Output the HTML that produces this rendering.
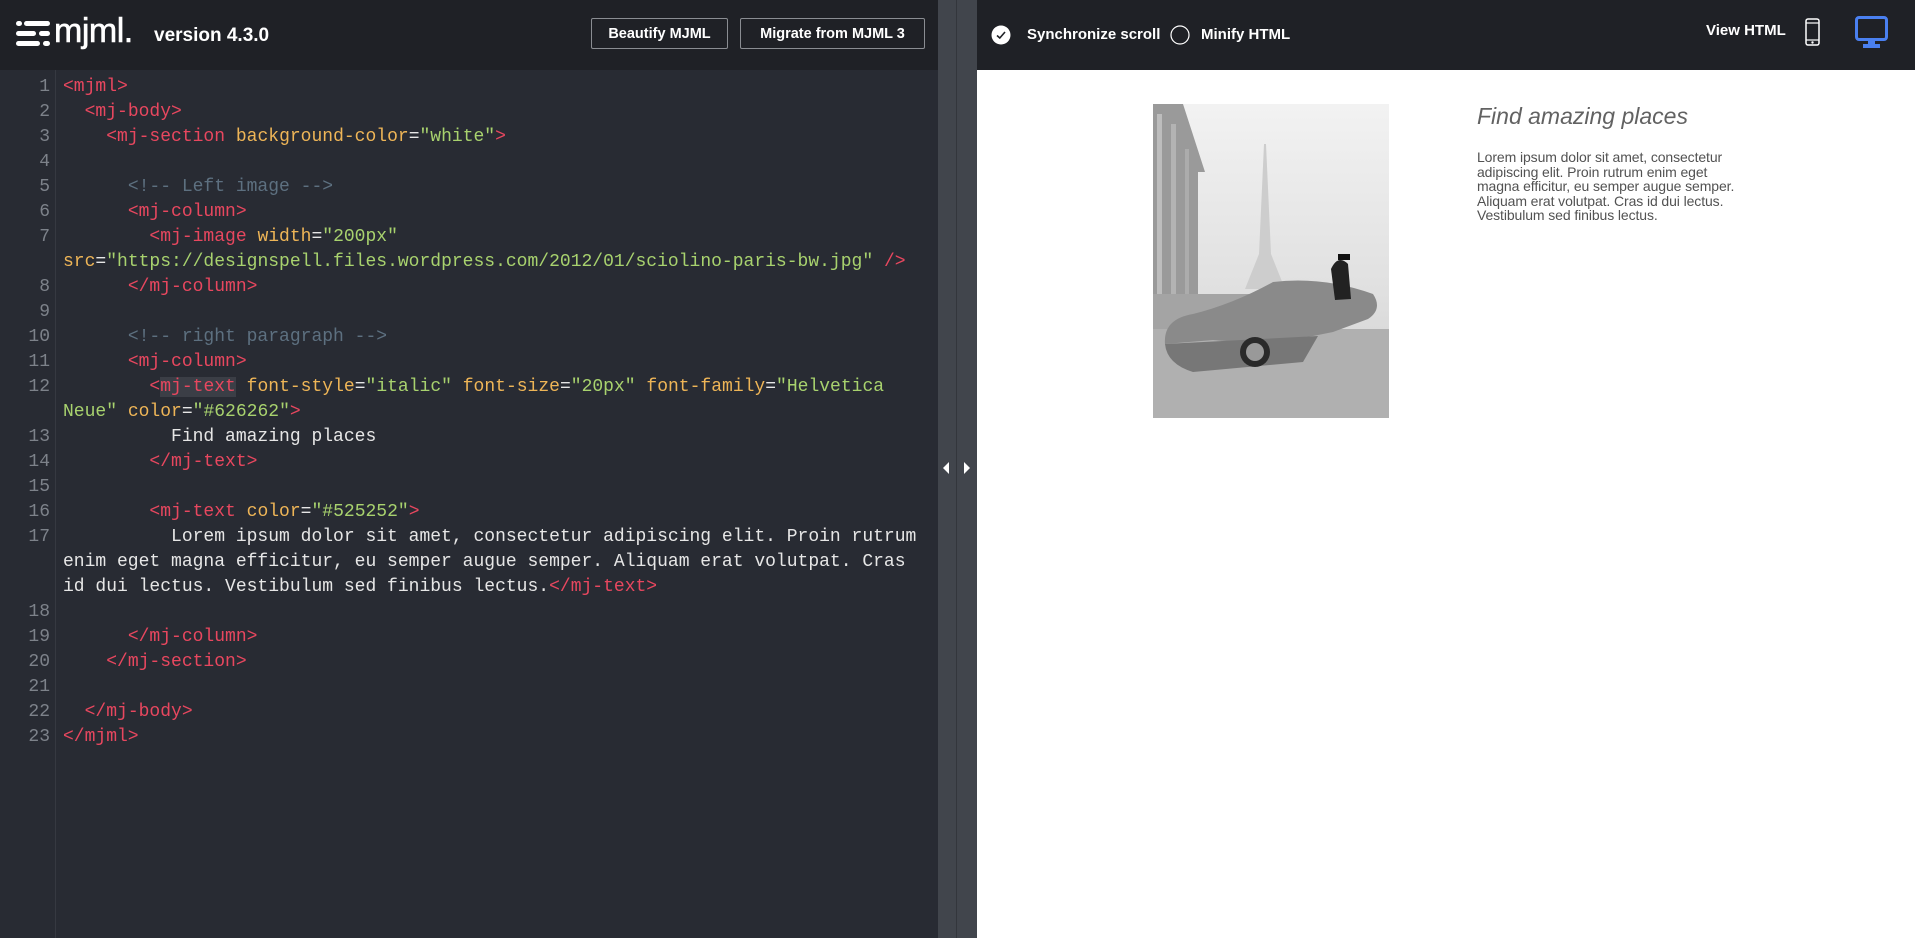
<!DOCTYPE html>
<html><head><meta charset="utf-8"><style>
*{margin:0;padding:0;box-sizing:border-box}
body{width:1915px;height:938px;overflow:hidden;background:#fff;font-family:"Liberation Sans",sans-serif;position:relative}
.hdr{position:absolute;top:0;height:70px;background:#1f2126}
.btn{position:absolute;top:18px;height:31px;border:1px solid #8a8d92;border-radius:2px;color:#fff;font-weight:bold;font-size:14.5px;line-height:31px;text-align:center}
.ed{position:absolute;left:0;top:70px;width:938px;height:868px;background:#282b33}
.gut{position:absolute;left:0;top:70px;width:56px;height:868px;border-right:1px solid #363941}
pre{font-family:"Liberation Mono",monospace;font-size:18px;line-height:25px;position:absolute;top:75px}
.ln{left:0;width:50px;text-align:right;color:#7d828a}
.code{left:63px;color:#e6e6e6}
.t{color:#e8475f}.a{color:#eeb557}.s{color:#a8d26e}.c{color:#5d7080}
.hl{background:#3b3e46}
.ht{position:absolute;color:#fff;font-weight:bold}
</style></head><body>
<div class="hdr" style="left:0;width:938px"></div>
<div class="hdr" style="left:977px;width:938px"></div>
<svg style="position:absolute;left:16px;top:20px" width="34" height="28" viewBox="0 0 34 28">
<rect x="0" y="1" width="6" height="5" rx="2.5" fill="#fff"/><rect x="8" y="1" width="26" height="5" rx="2.5" fill="#fff"/>
<rect x="0" y="11" width="20" height="5" rx="2.5" fill="#fff"/><rect x="23" y="11" width="11" height="5" rx="2.5" fill="#fff"/>
<rect x="0" y="21" width="24" height="5" rx="2.5" fill="#fff"/><rect x="27" y="21" width="7" height="5" rx="2.5" fill="#fff"/>
</svg>
<div class="ht" style="left:54px;top:13px;font-size:34px;font-weight:normal;letter-spacing:-0.5px;line-height:36px;-webkit-text-stroke:0.6px #fff">mjml.</div>
<div class="ht" style="left:154px;top:25px;font-size:19px">version 4.3.0</div>
<div class="btn" style="left:591px;width:137px">Beautify MJML</div>
<div class="btn" style="left:740px;width:185px">Migrate from MJML 3</div>

<div class="ed"></div><div class="gut"></div>
<pre class="ln">1
2
3
4
5
6
7

8
9
10
11
12

13
14
15
16
17


18
19
20
21
22
23</pre>
<pre class="code"><span class="t">&lt;mjml&gt;</span>
  <span class="t">&lt;mj-body&gt;</span>
    <span class="t">&lt;mj-section</span> <span class="a">background-color</span>=<span class="s">"white"</span><span class="t">&gt;</span>

      <span class="c">&lt;!-- Left image --&gt;</span>
      <span class="t">&lt;mj-column&gt;</span>
        <span class="t">&lt;mj-image</span> <span class="a">width</span>=<span class="s">"200px"</span>
<span class="a">src</span>=<span class="s">"https://designspell.files.wordpress.com/2012/01/sciolino-paris-bw.jpg"</span> <span class="t">/&gt;</span>
      <span class="t">&lt;/mj-column&gt;</span>

      <span class="c">&lt;!-- right paragraph --&gt;</span>
      <span class="t">&lt;mj-column&gt;</span>
        <span class="t">&lt;<span class="hl">mj-text</span></span> <span class="a">font-style</span>=<span class="s">"italic"</span> <span class="a">font-size</span>=<span class="s">"20px"</span> <span class="a">font-family</span>=<span class="s">"Helvetica</span>
<span class="s">Neue"</span> <span class="a">color</span>=<span class="s">"#626262"</span><span class="t">&gt;</span>
          Find amazing places
        <span class="t">&lt;/mj-text&gt;</span>

        <span class="t">&lt;mj-text</span> <span class="a">color</span>=<span class="s">"#525252"</span><span class="t">&gt;</span>
          Lorem ipsum dolor sit amet, consectetur adipiscing elit. Proin rutrum
enim eget magna efficitur, eu semper augue semper. Aliquam erat volutpat. Cras
id dui lectus. Vestibulum sed finibus lectus.<span class="t">&lt;/mj-text&gt;</span>

      <span class="t">&lt;/mj-column&gt;</span>
    <span class="t">&lt;/mj-section&gt;</span>

  <span class="t">&lt;/mj-body&gt;</span>
<span class="t">&lt;/mjml&gt;</span></pre>

<div style="position:absolute;left:938px;top:0;width:39px;height:938px;background:#41454c"></div>
<div style="position:absolute;left:956px;top:0;width:1px;height:938px;background:#33363c"></div>
<svg style="position:absolute;left:942px;top:462px" width="30" height="12" viewBox="0 0 30 12"><path d="M7 0 L1 6 L7 12 Z" fill="#fff"/><path d="M22 0 L28 6 L22 12 Z" fill="#fff"/></svg>

<svg style="position:absolute;left:991px;top:25px" width="20" height="20" viewBox="0 0 20 20"><circle cx="10" cy="10" r="9.5" fill="#fff"/><path d="M6 10.5 L8.8 13 L14 7" stroke="#1f2126" stroke-width="1.6" fill="none"/></svg>
<div class="ht" style="left:1027px;top:26px;font-size:15px">Synchronize scroll</div>
<svg style="position:absolute;left:1170px;top:25px" width="20" height="20" viewBox="0 0 20 20"><circle cx="10" cy="10" r="9" fill="none" stroke="#fff" stroke-width="1.2"/></svg>
<div class="ht" style="left:1201px;top:26px;font-size:15px">Minify HTML</div>
<div class="ht" style="left:1706px;top:22px;font-size:15px">View HTML</div>
<svg style="position:absolute;left:1805px;top:18px" width="15" height="28" viewBox="0 0 15 28"><rect x="1" y="1" width="13" height="26" rx="2" fill="none" stroke="#fff" stroke-width="1.5"/><line x1="1" y1="5" x2="14" y2="5" stroke="#fff" stroke-width="1.2"/><line x1="1" y1="22" x2="14" y2="22" stroke="#fff" stroke-width="1.2"/><circle cx="7.5" cy="24.5" r="1.2" fill="#fff"/></svg>
<svg style="position:absolute;left:1855px;top:16px" width="33" height="33" viewBox="0 0 33 33"><rect x="1.5" y="1.5" width="30" height="22" rx="2.5" fill="none" stroke="#4a80f0" stroke-width="3"/><path d="M13 24 H20 V28 H25 V32 H8 V28 H13 Z" fill="#4a80f0"/></svg>

<svg style="position:absolute;left:1153px;top:104px" width="236" height="314" viewBox="0 0 236 314">
<defs><linearGradient id="sk" x1="0" y1="0" x2="0" y2="1"><stop offset="0" stop-color="#f2f2f2"/><stop offset="0.6" stop-color="#e0e0e0"/><stop offset="1" stop-color="#cfcfcf"/></linearGradient></defs>
<rect width="236" height="314" fill="url(#sk)"/>
<path d="M111 40 L113 40 L118 150 L132 185 L92 185 L106 150 Z" fill="#cdcdcd"/>
<path d="M0 0 L30 0 L52 68 L45 68 L45 200 L0 210 Z" fill="#9a9a9a"/>
<rect x="4" y="10" width="5" height="190" fill="#bdbdbd"/><rect x="18" y="20" width="5" height="180" fill="#b3b3b3"/><rect x="32" y="45" width="4" height="150" fill="#acacac"/>
<rect x="0" y="190" width="100" height="35" fill="#a4a4a4"/>
<rect x="0" y="225" width="236" height="89" fill="#b0b0b0"/>
<path d="M12 240 Q10 215 40 210 Q80 200 120 178 Q170 172 220 190 Q230 205 215 215 L180 228 L160 232 Q100 240 60 236 Z" fill="#8a8a8a"/>
<path d="M12 240 Q14 260 40 268 L150 258 L165 232 Z" fill="#777"/>
<circle cx="102" cy="248" r="15" fill="#2a2a2a"/><circle cx="102" cy="248" r="9" fill="#999"/>
<path d="M178 165 Q185 150 195 160 L198 195 L182 196 Z" fill="#222"/>
<rect x="185" y="150" width="12" height="6" fill="#111"/>
</svg>
<div style="position:absolute;left:1477px;top:103px;font-size:23px;font-style:italic;color:#626262">Find amazing places</div>
<div style="position:absolute;left:1477px;top:150px;width:320px;font-size:14px;line-height:14.6px;color:#525252;letter-spacing:-0.1px">Lorem ipsum dolor sit amet, consectetur<br>adipiscing elit. Proin rutrum enim eget<br>magna efficitur, eu semper augue semper.<br>Aliquam erat volutpat. Cras id dui lectus.<br>Vestibulum sed finibus lectus.</div>
</body></html>
